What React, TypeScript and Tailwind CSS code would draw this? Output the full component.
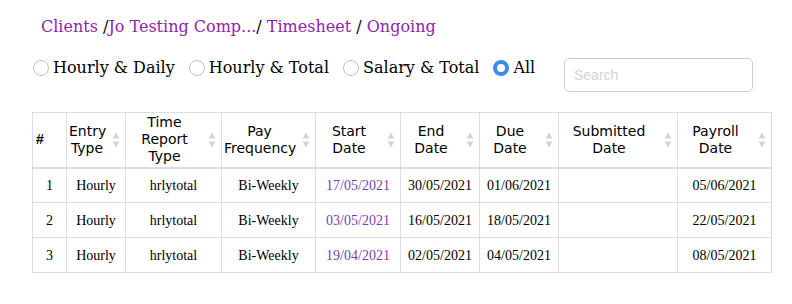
import React, { useState } from 'react';

type Row = {
  id: number;
  entryType: string;
  reportType: string;
  frequency: string;
  start: string;
  end: string;
  due: string;
  submitted: string;
  payroll: string;
};

const rows: Row[] = [
  { id: 1, entryType: 'Hourly', reportType: 'hrlytotal', frequency: 'Bi-Weekly', start: '17/05/2021', end: '30/05/2021', due: '01/06/2021', submitted: '', payroll: '05/06/2021' },
  { id: 2, entryType: 'Hourly', reportType: 'hrlytotal', frequency: 'Bi-Weekly', start: '03/05/2021', end: '16/05/2021', due: '18/05/2021', submitted: '', payroll: '22/05/2021' },
  { id: 3, entryType: 'Hourly', reportType: 'hrlytotal', frequency: 'Bi-Weekly', start: '19/04/2021', end: '02/05/2021', due: '04/05/2021', submitted: '', payroll: '08/05/2021' },
];

const filters = ['Hourly & Daily', 'Hourly & Total', 'Salary & Total', 'All'];

function SortIcon() {
  return (
    <svg width="8" height="16" viewBox="0 0 8 16" className="absolute right-[5px] top-1/2 -translate-y-1/2">
      <path d="M4 0.5 L7.5 6.5 L0.5 6.5 Z" fill="#d4d4d4" />
      <path d="M4 15.5 L7.5 9.5 L0.5 9.5 Z" fill="#d4d4d4" />
    </svg>
  );
}

function Th({ children, width }: { children: React.ReactNode; width: string }) {
  return (
    <th className={`relative border border-[#dadeea] border-b-2 pl-[2px] pr-[20px] text-center align-middle font-normal ${width}`}>
      {children}
      <SortIcon />
    </th>
  );
}

export default function App() {
  const [filter, setFilter] = useState('All');

  return (
    <div className="min-h-[304px] w-[792px] bg-white pl-[32px] pt-[14px]">
      {/* Breadcrumb */}
      <div className="pl-[9px] text-[16px] leading-[26px] text-black [font-family:'DejaVu_Serif',serif]">
        <span className="text-[#8e24aa]">Clients</span> /
        <span className="text-[#8e24aa]">Jo Testing Comp...</span>/{' '}
        <span className="text-[#8e24aa]">Timesheet</span> /{' '}
        <span className="text-[#8e24aa]">Ongoing</span>
      </div>

      {/* Filters + search */}
      <div className="mt-[11px] flex items-start">
        <div className="flex h-[34px] w-[532px] items-center gap-[14px] pl-[1px] text-[16px] text-black [font-family:'DejaVu_Serif',serif]">
          {filters.map((f) => (
            <label key={f} className="flex cursor-pointer items-center gap-[4px]" onClick={() => setFilter(f)}>
              {filter === f ? (
                <span className="h-[16px] w-[16px] rounded-full border-[4.5px] border-[#3d8be8] bg-white" />
              ) : (
                <span className="h-[16px] w-[16px] rounded-full border border-[#c4c0bc] bg-white" />
              )}
              <span>{f}</span>
            </label>
          ))}
        </div>
        <input
          placeholder="Search"
          className="mt-[7px] h-[34px] w-[189px] rounded-[5px] border border-[#d2ccc8] px-[9px] text-[14px] text-black outline-none placeholder:text-[#d3d3d3] [font-family:'Liberation_Sans',sans-serif]"
        />
      </div>

      {/* Table */}
      <table className="mt-[20px] w-[739px] table-fixed border-collapse text-black">
        <thead className="text-[14px] leading-[17px] [font-family:'DejaVu_Sans',sans-serif]">
          <tr className="h-[55px]">
            <th className="w-[34px] border border-b-2 border-[#dadeea] pl-[3px] text-left font-bold [font-family:'Liberation_Sans',sans-serif]">#</th>
            <Th width="w-[59px]">Entry Type</Th>
            <Th width="w-[96px]">Time Report Type</Th>
            <Th width="w-[94px]">Pay Frequency</Th>
            <Th width="w-[85px]">Start Date</Th>
            <Th width="w-[79px]">End Date</Th>
            <Th width="w-[79px]">Due Date</Th>
            <Th width="w-[119px]">Submitted Date</Th>
            <Th width="w-[94px]">Payroll Date</Th>
          </tr>
        </thead>
        <tbody className="text-[14px] [font-family:'Liberation_Serif',serif]">
          {rows.map((r) => (
            <tr key={r.id} className="h-[35px] text-center">
              <td className="border border-[#dadeea]">{r.id}</td>
              <td className="border border-[#dadeea]">{r.entryType}</td>
              <td className="border border-[#dadeea]">{r.reportType}</td>
              <td className="border border-[#dadeea]">{r.frequency}</td>
              <td className="border border-[#dadeea] text-[#7a3fae]">{r.start}</td>
              <td className="border border-[#dadeea]">{r.end}</td>
              <td className="border border-[#dadeea]">{r.due}</td>
              <td className="border border-[#dadeea]">{r.submitted}</td>
              <td className="border border-[#dadeea]">{r.payroll}</td>
            </tr>
          ))}
        </tbody>
      </table>
    </div>
  );
}
